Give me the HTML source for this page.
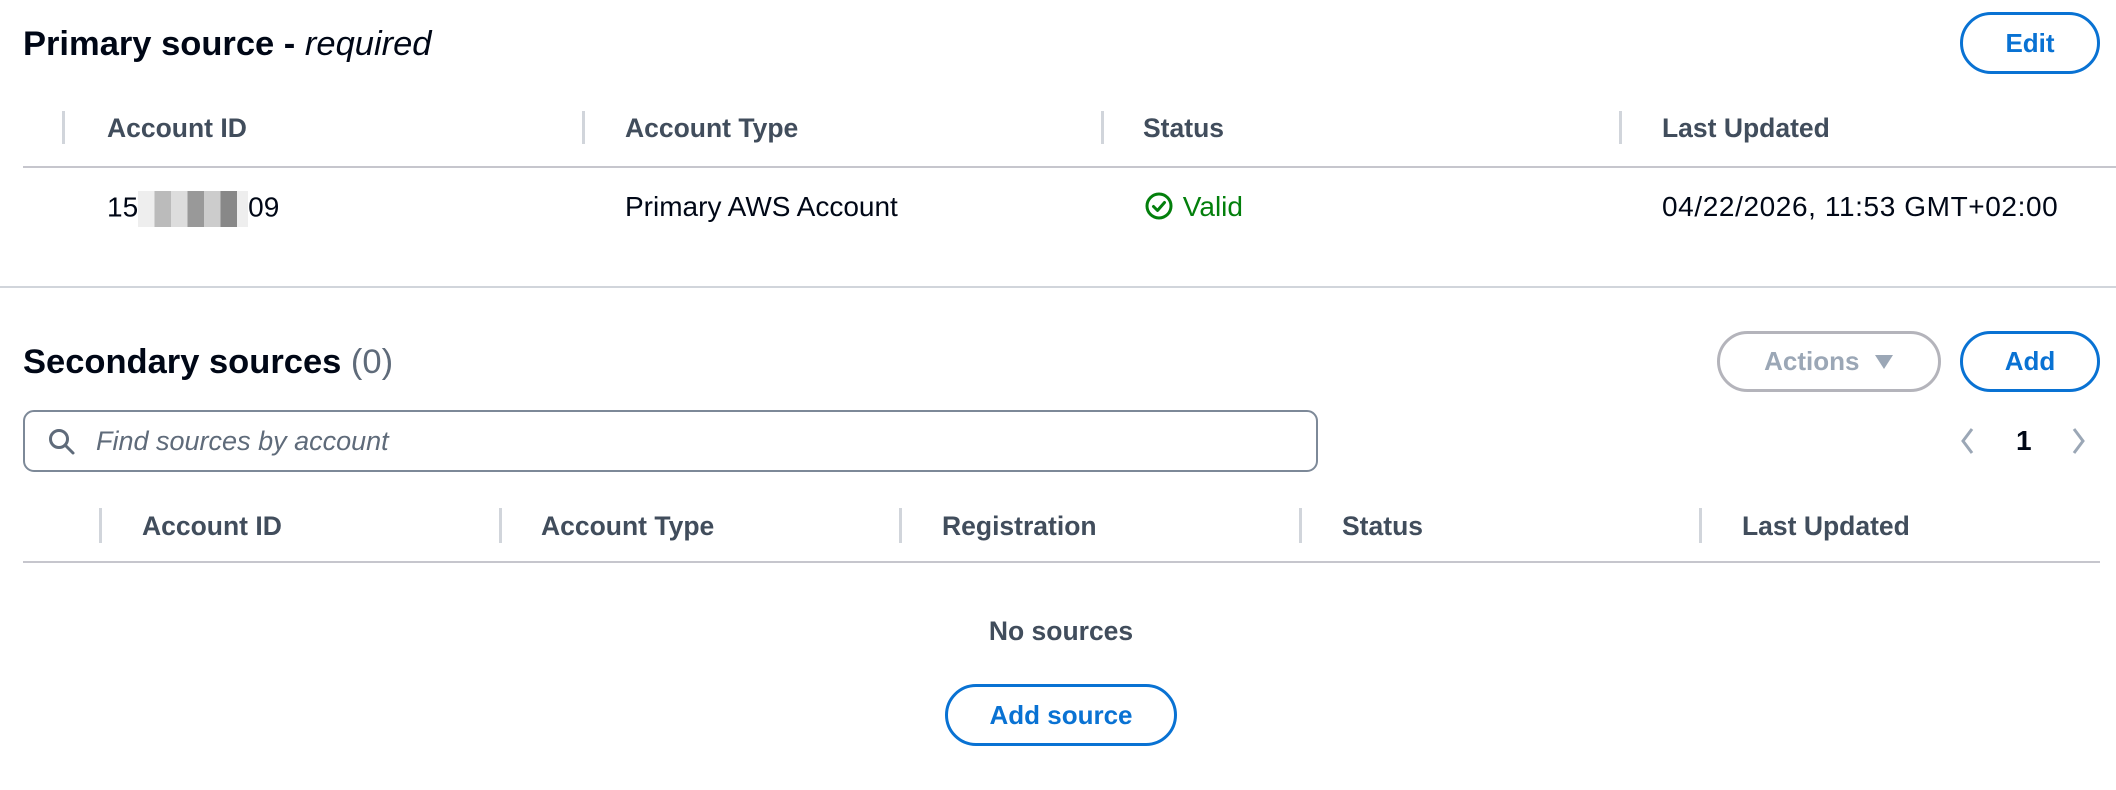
<!DOCTYPE html>
<html><head><meta charset="utf-8"><style>
*{box-sizing:border-box;margin:0;padding:0}
body{width:2116px;height:790px;background:#fff;font-family:"Liberation Sans",sans-serif;position:relative;overflow:hidden;color:#000716}
.a{position:absolute;white-space:nowrap}
.h{font-weight:bold;font-size:34.5px;line-height:40px}
.th{font-weight:bold;font-size:26.5px;color:#414d5c;line-height:30px}
.sep{position:absolute;width:3px;background:#d1d5db}
.line{position:absolute;height:2px;background:#c6c6cd}
.btn{position:absolute;border:3px solid #0972d3;border-radius:40px;color:#0972d3;font-weight:bold;font-size:26px;display:flex;align-items:center;justify-content:center}
.td{font-size:28px;line-height:32px}
</style></head><body>
<div class="a h" style="left:23px;top:24px">Primary source - <i style="font-weight:normal">required</i></div>
<div class="btn" style="left:1960px;top:12px;width:140px;height:62px">Edit</div>

<div class="sep" style="left:62px;top:111px;height:33px"></div>
<div class="sep" style="left:582px;top:111px;height:33px"></div>
<div class="sep" style="left:1101px;top:111px;height:33px"></div>
<div class="sep" style="left:1619px;top:111px;height:33px"></div>
<div class="a th" style="left:107px;top:113px">Account ID</div>
<div class="a th" style="left:625px;top:113px">Account Type</div>
<div class="a th" style="left:1143px;top:113px">Status</div>
<div class="a th" style="left:1662px;top:113px">Last Updated</div>
<div class="line" style="left:23px;top:166px;width:2093px"></div>

<div class="a td" style="left:107px;top:191px">15<span style="display:inline-block;width:110px;height:36px;vertical-align:middle;background:linear-gradient(90deg,#eee 0 15%,#bbb 15% 30%,#ddd 30% 45%,#999 45% 60%,#ccc 60% 75%,#888 75% 90%,#eee 90%)"></span>09</div>
<div class="a td" style="left:625px;top:191px">Primary AWS Account</div>
<div class="a td" style="left:1145px;top:191px;color:#037f0c">
<svg width="30" height="30" viewBox="0 0 30 30" style="vertical-align:-5px"><circle cx="14" cy="15" r="12" fill="none" stroke="#037f0c" stroke-width="3"/><path d="M8.5 15.5l4 4 7-8" fill="none" stroke="#037f0c" stroke-width="3" stroke-linecap="round" stroke-linejoin="round"/></svg> Valid</div>
<div class="a td" style="left:1662px;top:191px;letter-spacing:0.6px">04/22/2026, 11:53 GMT+02:00</div>

<div class="line" style="left:0;top:286px;width:2116px;background:#d1d5db"></div>

<div class="a h" style="left:23px;top:342px">Secondary sources <span style="font-weight:normal;color:#5f6b7a">(0)</span></div>
<div class="btn" style="left:1717px;top:331px;width:224px;height:61px;border-color:#b4b4bb;color:#9ba7b6">Actions&nbsp;&nbsp;<svg width="20" height="16" viewBox="0 0 20 16"><path d="M1 1h18l-9 14z" fill="#9ba7b6"/></svg></div>
<div class="btn" style="left:1960px;top:331px;width:140px;height:61px">Add</div>

<div class="a" style="left:23px;top:410px;width:1295px;height:62px;border:2px solid #7d8998;border-radius:11px"></div>
<svg class="a" style="left:48px;top:428px" width="28" height="28" viewBox="0 0 28 28"><circle cx="11" cy="11" r="8.5" fill="none" stroke="#5f6b7a" stroke-width="3"/><path d="M17 17l8 8" stroke="#5f6b7a" stroke-width="3" stroke-linecap="round"/></svg>
<div class="a td" style="left:96px;top:425px;font-style:italic;color:#5f6b7a;font-size:27px">Find sources by account</div>

<svg class="a" style="left:1958px;top:426px" width="20" height="30" viewBox="0 0 20 30"><path d="M14 3L5 15l9 12" fill="none" stroke="#9ba7b6" stroke-width="3"/></svg>
<div class="a td" style="left:2016px;top:425px;font-weight:bold">1</div>
<svg class="a" style="left:2068px;top:426px" width="20" height="30" viewBox="0 0 20 30"><path d="M6 3l9 12-9 12" fill="none" stroke="#9ba7b6" stroke-width="3"/></svg>

<div class="sep" style="left:99px;top:508px;height:35px"></div>
<div class="sep" style="left:499px;top:508px;height:35px"></div>
<div class="sep" style="left:899px;top:508px;height:35px"></div>
<div class="sep" style="left:1299px;top:508px;height:35px"></div>
<div class="sep" style="left:1699px;top:508px;height:35px"></div>
<div class="a th" style="left:142px;top:511px">Account ID</div>
<div class="a th" style="left:541px;top:511px">Account Type</div>
<div class="a th" style="left:942px;top:511px">Registration</div>
<div class="a th" style="left:1342px;top:511px">Status</div>
<div class="a th" style="left:1742px;top:511px">Last Updated</div>
<div class="line" style="left:23px;top:561px;width:2077px"></div>

<div class="a th" style="left:861px;top:616px;width:400px;text-align:center">No sources</div>
<div class="btn" style="left:945px;top:684px;width:232px;height:62px">Add source</div>
</body></html>
